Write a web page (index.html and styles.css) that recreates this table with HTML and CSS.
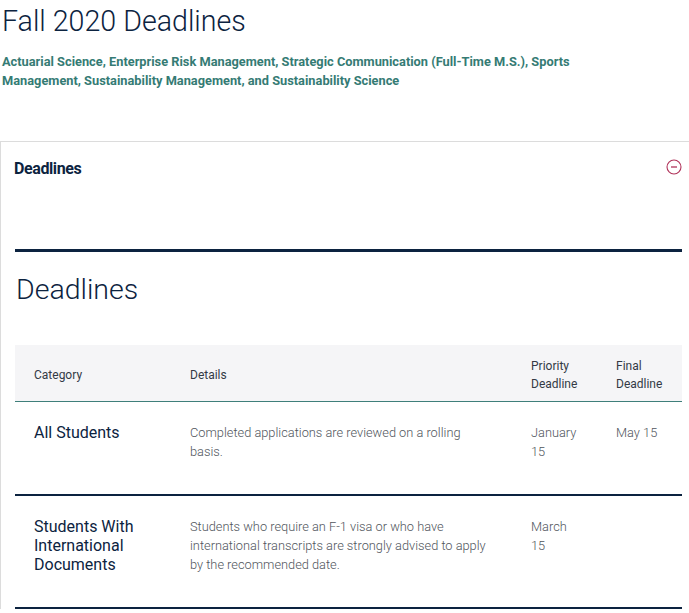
FILE: index.html
```html
<!DOCTYPE html>
<html lang="en">
<head>
<meta charset="utf-8">
<title>Fall 2020 Deadlines</title>
<link rel="stylesheet" href="styles.css">
</head>
<body>
<div class="page">
  <h1 class="title">Fall 2020 Deadlines</h1>
  <p class="programs">Actuarial Science, Enterprise Risk Management, Strategic Communication (Full-Time M.S.), Sports Management, Sustainability Management, and Sustainability Science</p>

  <section class="accordion">
    <div class="acc-head">
      <h2 class="acc-label">Deadlines</h2>
      <svg class="acc-icon" width="16" height="16" viewBox="0 0 16 16" aria-hidden="true">
        <circle cx="8" cy="8" r="7" fill="none" stroke="#b0335a" stroke-width="1.1"/>
        <line x1="5" y1="8" x2="11" y2="8" stroke="#b0335a" stroke-width="1.3"/>
      </svg>
    </div>
    <div class="acc-body">
      <div class="rule"></div>
      <h3 class="section-title">Deadlines</h3>
      <table class="deadlines">
        <colgroup>
          <col class="c-cat">
          <col class="c-det">
          <col class="c-pri">
          <col class="c-fin">
        </colgroup>
        <thead>
          <tr>
            <th>Category</th>
            <th>Details</th>
            <th>Priority Deadline</th>
            <th>Final Deadline</th>
          </tr>
        </thead>
        <tbody>
          <tr>
            <td class="cat">All Students</td>
            <td class="det">Completed applications are reviewed on a rolling basis.</td>
            <td class="date">January 15</td>
            <td class="date">May 15</td>
          </tr>
          <tr>
            <td class="cat">Students With International Documents</td>
            <td class="det">Students who require an F-1 visa or who have international transcripts are strongly advised to apply by the recommended date.</td>
            <td class="date">March 15</td>
            <td class="date"></td>
          </tr>
        </tbody>
      </table>
    </div>
  </section>
</div>
</body>
</html>
```
FILE: styles.css
```css
html, body {
  margin: 0;
  padding: 0;
  background: #ffffff;
  overflow: hidden;
}
body {
  font-family: Roboto, "Liberation Sans", Arial, sans-serif;
  color: #0c2340;
}
.page {
  padding-top: 3px;
}
.title {
  margin: 0 0 0 2px;
  font-size: 28.6px;
  line-height: 36px;
  font-weight: 300;
  color: #0c2340;
}
.programs {
  margin: 13px 0 0 2px;
  width: 585px;
  font-size: 12.8px;
  line-height: 19px;
  font-weight: 700;
  color: #357b74;
}
.accordion {
  margin-top: 51px;
  border-top: 1px solid #dcdcdc;
  border-left: 1px solid #dcdcdc;
  padding: 0 7px 0 13px;
}
.acc-head {
  display: flex;
  justify-content: space-between;
  align-items: flex-start;
  padding-top: 17px;
}
.acc-label {
  margin: 0;
  font-size: 16px;
  line-height: 20px;
  font-weight: 700;
  letter-spacing: -0.4px;
  color: #0c2340;
}
.acc-icon {
  display: block;
  margin-top: 0;
}
.acc-body {
  padding-left: 1px;
  padding-top: 70px;
}
.rule {
  height: 3px;
  background: #0c2340;
}
.section-title {
  margin: 20px 0 0 1px;
  font-size: 28.5px;
  line-height: 36px;
  font-weight: 300;
  color: #0c2340;
}
.deadlines {
  margin-top: 37px;
  width: 100%;
  border-collapse: collapse;
  table-layout: fixed;
}
.c-cat { width: 156px; }
.c-det { width: 341px; }
.c-pri { width: 85px; }
.c-fin { width: 85px; }
.deadlines thead tr {
  background: #f5f5f7;
  border-bottom: 1px solid #3f7f7a;
}
.deadlines th {
  text-align: left;
  font-weight: 400;
  font-size: 12px;
  line-height: 18px;
  color: #333a45;
  padding: 12px 10px 8px 19px;
  vertical-align: middle;
}
.deadlines th:nth-child(3),
.deadlines th:nth-child(4) {
  padding-right: 4px;
}
.deadlines tbody tr {
  border-bottom: 2px solid #0c2340;
}
.deadlines td {
  vertical-align: top;
  padding: 21px 10px 33px 19px;
  line-height: 19px;
}
.deadlines td.cat {
  font-size: 16px;
  font-weight: 400;
  color: #0c2340;
  padding-right: 20px;
}
.deadlines td.det {
  font-size: 12.8px;
  font-weight: 300;
  color: #50555c;
  padding-right: 24px;
}
.deadlines td.date {
  font-size: 12.8px;
  font-weight: 300;
  color: #50555c;
  padding-right: 14px;
}
```
